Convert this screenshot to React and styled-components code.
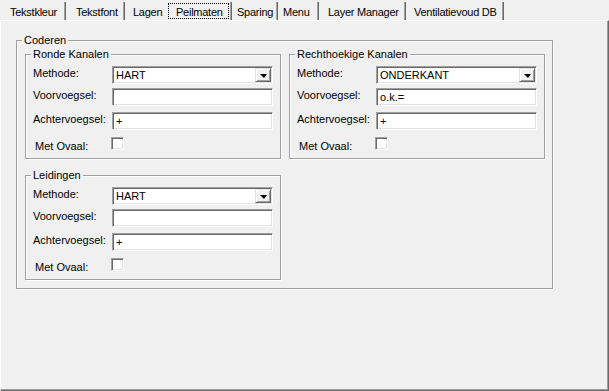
import React from "react";
import styled, { createGlobalStyle } from "styled-components";

const tabs = [
	{ label: "Tekstkleur", w: 64, pad: 7 },
	{ label: "Tekstfont", w: 59, pad: 9 },
	{ label: "Lagen", w: 43, pad: 7, nosep: true },
	{ label: "Peilmaten", w: 64, pad: 7, active: true },
	{ label: "Sparing", w: 46, pad: 4 },
	{ label: "Menu", w: 41, pad: 4 },
	{ label: "Layer Manager", w: 87, pad: 8 },
	{ label: "Ventilatievoud DB", w: 98, pad: 7 },
];

const groups = [
	{ title: "Ronde Kanalen", methode: "HART", voor: "", achter: "+" },
	{ title: "Rechthoekige Kanalen", methode: "ONDERKANT", voor: "o.k.=", achter: "+" },
	{ title: "Leidingen", methode: "HART", voor: "", achter: "+" },
];

const App = () => {
	return (
		<>
			<GlobalStyle />
			<Window>
				<TabStrip>
					{tabs.map((t) => (
						<Tab key={t.label} w={t.w} nosep={t.nosep}>
							<TabLabel active={t.active} pad={t.pad}>
								{t.label}
							</TabLabel>
						</Tab>
					))}
				</TabStrip>
				<Panel>
					<Coderen>
						<Title>Coderen</Title>
						<GroupGrid>
							{groups.map((g) => (
								<Group key={g.title}>
									<Title>{g.title}</Title>
									<Field top={0}>
										<Label>Methode:</Label>
										<Combo>
											<ComboText>{g.methode}</ComboText>
											<DropButton>
												<Arrow />
											</DropButton>
										</Combo>
									</Field>
									<Field top={4}>
										<Label>Voorvoegsel:</Label>
										<TextBox>{g.voor}</TextBox>
									</Field>
									<Field top={6}>
										<Label>Achtervoegsel:</Label>
										<TextBox>{g.achter}</TextBox>
									</Field>
									<CheckRow>
										<CheckLabel>Met Ovaal:</CheckLabel>
										<CheckBox />
									</CheckRow>
								</Group>
							))}
						</GroupGrid>
					</Coderen>
				</Panel>
			</Window>
		</>
	);
};

export default App;

const GlobalStyle = createGlobalStyle`
	html, body {
		margin: 0;
		padding: 0;
		background: #f0f0f0;
	}
	body {
		font-family: "Liberation Sans", Arial, sans-serif;
		font-size: 11px;
		color: #000;
	}
`;

const Window = styled.div`
	width: 609px;
	height: 391px;
	display: flex;
	flex-direction: column;
	background: #f0f0f0;
	overflow: hidden;
`;

const TabStrip = styled.div`
	height: 20px;
	display: flex;
	padding-left: 2px;
	box-sizing: border-box;
	letter-spacing: -0.25px;
`;

const Tab = styled.div`
	position: relative;
	width: ${(p) => p.w}px;
	flex: none;
	box-sizing: border-box;
	padding-top: 3px;
	white-space: nowrap;

	&::after {
		content: "";
		display: ${(p) => (p.nosep ? "none" : "block")};
		position: absolute;
		right: 0;
		top: 2px;
		bottom: 0;
		width: 2px;
		background: linear-gradient(to right, #a0a0a0 0 1px, #696969 1px 2px);
	}
`;

const TabLabel = styled.span`
	display: inline-block;
	line-height: 12px;
	padding: 2px 5px 0 ${(p) => p.pad}px;
	border: 1px dotted ${(p) => (p.active ? "#000" : "transparent")};
`;

const Panel = styled.div`
	flex: 1;
	display: flex;
	align-items: flex-start;
	padding: 19px 0 0 15px;
	border-top: 1px solid #fff;
	border-left: 1px solid #fff;
	border-right: 1px solid #696969;
	border-bottom: 1px solid #696969;
	box-shadow: inset -1px -1px 0 #a0a0a0;
`;

const Box = styled.div`
	position: relative;
	box-sizing: border-box;
	border: 1px solid #a0a0a0;
	box-shadow: 1px 1px 0 #fff, inset 1px 1px 0 #fff;
`;

const Coderen = styled(Box)`
	width: 537px;
	height: 249px;
	padding: 13px 7px 8px 8px;
`;

const Title = styled.div`
	position: absolute;
	top: -7px;
	left: 5px;
	padding: 0 2px;
	line-height: 13px;
	background: #f0f0f0;
	white-space: nowrap;
`;

const GroupGrid = styled.div`
	display: grid;
	grid-template-columns: 256px 256px;
	column-gap: 8px;
	row-gap: 16px;
	align-items: start;
`;

const Group = styled(Box)`
	width: 256px;
	height: 105px;
	padding: 11px 7px 8px 7px;
	display: flex;
	flex-direction: column;
`;

const Field = styled.div`
	display: flex;
	align-items: flex-start;
	margin-top: ${(p) => p.top}px;
`;

const Label = styled.div`
	width: 79px;
	flex: none;
	line-height: 12px;
	padding-top: 1px;
	white-space: nowrap;
`;

const sunken = `
	box-sizing: border-box;
	border: 1px solid;
	border-color: #a0a0a0 #fff #fff #a0a0a0;
	box-shadow: inset 1px 1px 0 #696969, inset -1px -1px 0 #e3e3e3;
	background: #fff;
`;

const TextBox = styled.div`
	${sunken}
	width: 161px;
	height: 18px;
	padding: 0 3px;
	line-height: 16px;
	white-space: nowrap;
`;

const Combo = styled.div`
	${sunken}
	width: 161px;
	height: 18px;
	display: flex;
	align-items: stretch;
	padding: 1px;
`;

const ComboText = styled.div`
	flex: 1;
	padding-left: 2px;
	line-height: 15px;
`;

const DropButton = styled.div`
	width: 16px;
	box-sizing: border-box;
	display: flex;
	align-items: center;
	justify-content: center;
	background: #f0f0f0;
	border: 1px solid;
	border-color: #e3e3e3 #696969 #696969 #e3e3e3;
	box-shadow: inset 1px 1px 0 #fff, inset -1px -1px 0 #a0a0a0;
`;

const Arrow = styled.div`
	width: 0;
	height: 0;
	border-left: 4px solid transparent;
	border-right: 3px solid transparent;
	border-top: 4px solid #000;
	margin-top: 1px;
`;

const CheckRow = styled.div`
	display: flex;
	align-items: flex-start;
	margin-top: 7px;
`;

const CheckLabel = styled.div`
	width: 76px;
	flex: none;
	padding: 3px 0 0 2px;
	line-height: 12px;
	white-space: nowrap;
`;

const CheckBox = styled.div`
	${sunken}
	width: 13px;
	height: 13px;
`;
